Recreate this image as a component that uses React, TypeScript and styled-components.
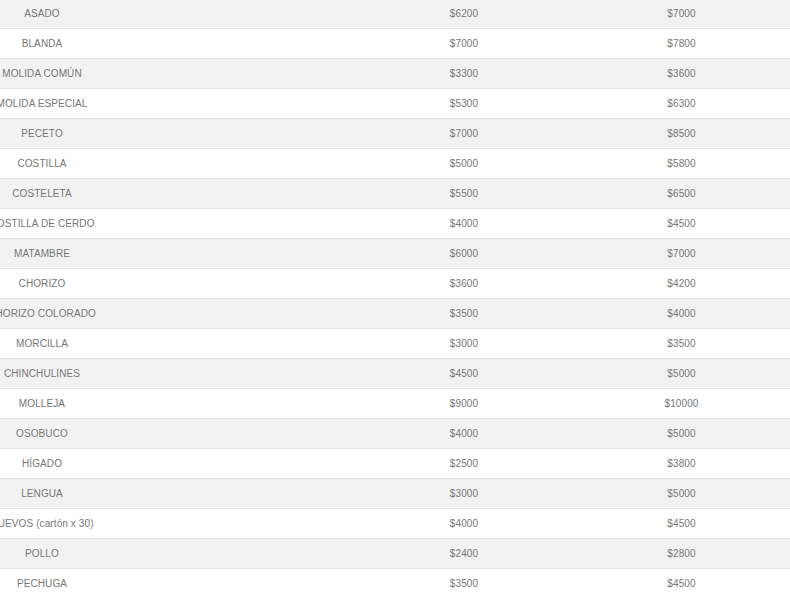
import React from "react";
import styled, { createGlobalStyle } from "styled-components";

const Global = createGlobalStyle`
  html, body { margin: 0; padding: 0; background: #fff; overflow: hidden; }
  body { font-family: "Liberation Sans", Arial, Helvetica, sans-serif; }
`;

const Table = styled.div`
  display: flex;
  flex-direction: column;
  margin-top: -1px;
  margin-left: -100px;
  width: 890px;
`;

const Row = styled.div<{ $alt: boolean }>`
  display: grid;
  grid-template-columns: 284px 171px 218px 217px;
  height: 29px;
  align-items: center;
  background: ${(p) => (p.$alt ? "#f2f2f2" : "#ffffff")};
  border-bottom: 1px solid #e2e2e2;
`;

const Cell = styled.div<{ $col: number }>`
  grid-column: ${(p) => p.$col};
  text-align: center;
  white-space: nowrap;
  font-size: 10px;
  color: #767676;
  letter-spacing: 0.1px;
`;

const rows: [string, number, number][] = [
  ["ASADO", 6200, 7000],
  ["BLANDA", 7000, 7800],
  ["MOLIDA COMÚN", 3300, 3600],
  ["MOLIDA ESPECIAL", 5300, 6300],
  ["PECETO", 7000, 8500],
  ["COSTILLA", 5000, 5800],
  ["COSTELETA", 5500, 6500],
  ["COSTILLA DE CERDO", 4000, 4500],
  ["MATAMBRE", 6000, 7000],
  ["CHORIZO", 3600, 4200],
  ["CHORIZO COLORADO", 3500, 4000],
  ["MORCILLA", 3000, 3500],
  ["CHINCHULINES", 4500, 5000],
  ["MOLLEJA", 9000, 10000],
  ["OSOBUCO", 4000, 5000],
  ["HÍGADO", 2500, 3800],
  ["LENGUA", 3000, 5000],
  ["HUEVOS (cartón x 30)", 4000, 4500],
  ["POLLO", 2400, 2800],
  ["PECHUGA", 3500, 4500],
];

export default function App() {
  return (
    <>
      <Global />
      <Table>
        {rows.map(([name, a, b], i) => (
          <Row key={name} $alt={i % 2 === 0}>
            <Cell $col={1}>{name}</Cell>
            <Cell $col={3}>${a}</Cell>
            <Cell $col={4}>${b}</Cell>
          </Row>
        ))}
      </Table>
    </>
  );
}
